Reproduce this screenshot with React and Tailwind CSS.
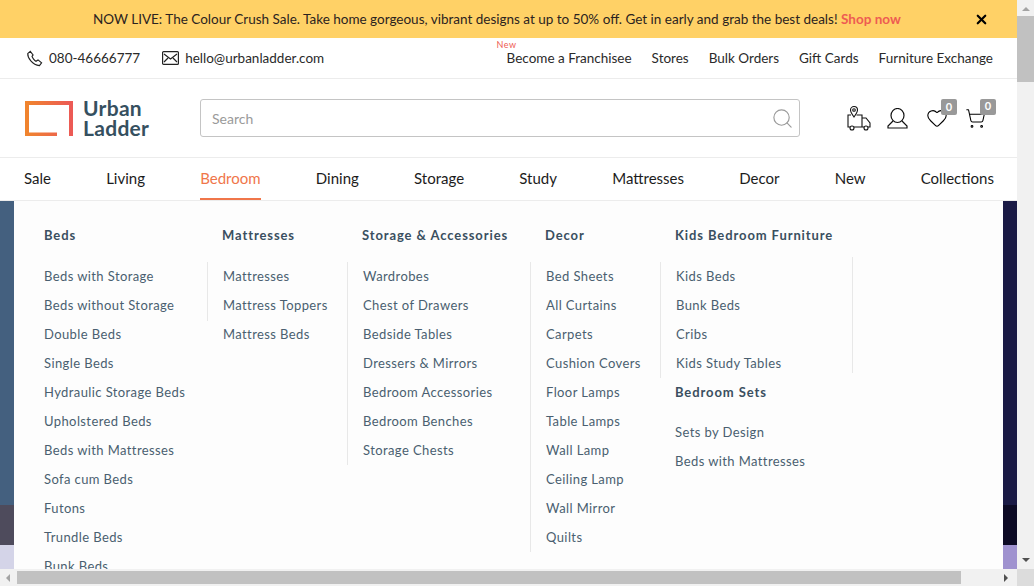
import { Heart, ShoppingCart, Search, X } from 'lucide-react';

const font = { fontFamily: 'Lato' };

const topLinks = ['Become a Franchisee', 'Stores', 'Bulk Orders', 'Gift Cards', 'Furniture Exchange'];
const navLinks = ['Sale', 'Living', 'Bedroom', 'Dining', 'Storage', 'Study', 'Mattresses', 'Decor', 'New', 'Collections'];

const menu = [
  { title: 'Beds', w: 'w-[178px]', first: true, h: 'h-[338px]', items: ['Beds with Storage', 'Beds without Storage', 'Double Beds', 'Single Beds', 'Hydraulic Storage Beds', 'Upholstered Beds', 'Beds with Mattresses', 'Sofa cum Beds', 'Futons', 'Trundle Beds', 'Bunk Beds'] },
  { title: 'Mattresses', w: 'w-[140px]', h: 'h-[59px]', items: ['Mattresses', 'Mattress Toppers', 'Mattress Beds'] },
  { title: 'Storage & Accessories', w: 'w-[183px]', h: 'h-[203px]', items: ['Wardrobes', 'Chest of Drawers', 'Bedside Tables', 'Dressers & Mirrors', 'Bedroom Accessories', 'Bedroom Benches', 'Storage Chests'] },
  { title: 'Decor', w: 'w-[130px]', h: 'h-[290px]', items: ['Bed Sheets', 'All Curtains', 'Carpets', 'Cushion Covers', 'Floor Lamps', 'Table Lamps', 'Wall Lamp', 'Ceiling Lamp', 'Wall Mirror', 'Quilts'] },
];

function MenuLink({ children }) {
  return <li className="h-[29px] leading-[29px] text-[13px] tracking-[0.4px] text-[#4a5f70] whitespace-nowrap">{children}</li>;
}

function MenuTitle({ children }) {
  return <div className="text-[13px] font-bold tracking-[0.9px] text-[#3a4f60] whitespace-nowrap">{children}</div>;
}

function Logo() {
  return (
    <div className="flex items-center gap-[10px] w-[175px]">
      <svg width="48" height="35" viewBox="0 0 48 35" fill="none">
        <defs>
          <linearGradient id="lg" x1="0" y1="0" x2="1" y2="0">
            <stop offset="0" stopColor="#f0842e" />
            <stop offset="1" stopColor="#ec5a55" />
          </linearGradient>
        </defs>
        <path d="M32 33.5H2V2H46V35" stroke="url(#lg)" strokeWidth="4" />
      </svg>
      <div className="text-[21px] leading-[20px] font-bold text-[#36505f] tracking-[0.3px]">Urban<br />Ladder</div>
    </div>
  );
}

export default function App() {
  return (
    <div className="h-[586px] w-[1034px] overflow-hidden flex flex-col relative bg-white" style={font}>
      <div className="flex flex-1 min-h-0">
        <div className="w-[1017px] flex flex-col">
          <div className="h-[38px] bg-[#ffd166] flex items-center text-[13.5px] text-[#2b2320] shrink-0">
            <span className="ml-[93px] whitespace-nowrap">NOW LIVE: The Colour Crush Sale. Take home gorgeous, vibrant designs at up to 50% off. Get in early and grab the best deals! <span className="font-bold text-[#ee5c52]">Shop now</span></span>
            <X size={15} strokeWidth={3.5} className="ml-auto mr-[28px] text-black" />
          </div>

          <div className="h-[41px] border-b border-[#ececec] flex items-center justify-between pl-[26px] pr-[24px] text-[13.5px] text-[#2a2a2a] shrink-0">
            <div className="flex items-center">
              <svg width="17" height="17" viewBox="0 0 24 24" fill="none" stroke="#222" strokeWidth="1.6"><path d="M6 2 2.5 5C2 11 9 21 19 22l3-4-5-4-3 2c-2-1-5-5-5.500-7L10 7z" /></svg>
              <span className="ml-[6px]">080-46666777</span>
              <svg className="ml-[22px]" width="17" height="14" viewBox="0 0 17 14" fill="none" stroke="#222" strokeWidth="1.2"><rect x="0.600" y="0.600" width="15.800" height="12.800" rx="1" /><path d="M2 3l6.500 5L15 3M2 11l4-4M15 11l-4-4" /></svg>
              <span className="ml-[6px]">hello@urbanladder.com</span>
            </div>
            <div className="flex gap-[20px] relative">
              <span className="absolute left-[-10px] top-[-10px] text-[9px] tracking-[0.5px] text-[#ee5c52]">New</span>
              {topLinks.map((l) => <span key={l} className="whitespace-nowrap">{l}</span>)}
            </div>
          </div>

          <div className="h-[79px] border-b border-[#ececec] flex items-center pl-[25px] shrink-0">
            <Logo />
            <div className="w-[600px] h-[38px] border border-[#c4c4c4] rounded-[3px] flex items-center justify-between pl-[11px] pr-[5px] text-[14px] text-[#9a9a9a]">
              <span>Search</span>
              <Search size={23} strokeWidth={1.2} className="text-[#9a9a9a]" />
            </div>
            <div className="flex items-center ml-[47px] text-black">
              <svg width="25" height="26" viewBox="0 0 25 26" fill="none" stroke="#111" strokeWidth="1.1">
                <path d="M7 12C4.500 8.500 3.500 7 3.500 5a3.500 3.500 0 0 1 7 0c0 2-1 3.500-3.500 7z" />
                <circle cx="7" cy="5" r="1.300" />
                <path d="M4 10H1v12h2M9.500 10H15v12H7M15 13h4l4 5v4h-2M15 22h2" />
                <circle cx="5" cy="23" r="2" /><circle cx="19" cy="23" r="2" />
              </svg>
              <svg className="ml-[15px]" width="21" height="21" viewBox="0 0 21 21" fill="none" stroke="#111" strokeWidth="1.2">
                <ellipse cx="10.500" cy="7.500" rx="6.500" ry="7" />
                <path d="M6 13 1 18v2h19v-2l-5-5" />
              </svg>
              <div className="relative ml-[18px]">
                <Heart size={22} strokeWidth={1.2} />
                <span className="absolute left-[15px] top-[-8px] w-[16px] h-[16px] rounded-[2px] bg-[#999] text-white text-[11px] font-bold flex items-center justify-center">0</span>
              </div>
              <div className="relative ml-[17px]">
                <ShoppingCart size={21} strokeWidth={1.2} />
                <span className="absolute left-[15px] top-[-9px] w-[16px] h-[16px] rounded-[2px] bg-[#999] text-white text-[11px] font-bold flex items-center justify-center">0</span>
              </div>
            </div>
          </div>

          <div className="h-[43px] border-b border-[#ececec] flex justify-between pl-[24px] pr-[23px] text-[15px] text-[#1c1c1c] shrink-0">
            {navLinks.map((l) => (
              <span key={l} className={l === 'Bedroom' ? 'text-[#f0764a] border-b-2 border-[#f0764a] leading-[41px]' : 'leading-[41px]'}>{l}</span>
            ))}
          </div>

          <div className="relative flex-1 min-h-0 overflow-hidden bg-[#1a1a45]">
            <div className="flex h-full">
              <div className="w-[14px] flex flex-col">
                <div className="flex-1 bg-[#44607f]" />
                <div className="h-[40px] bg-[#4e4b5c]" />
                <div className="h-[24px] bg-[#d4d4e8]" />
              </div>
              <div className="flex-1" />
              <div className="w-[14px] flex flex-col">
                <div className="flex-1 bg-[#1a1a45]" />
                <div className="h-[40px] bg-[#0c0a24]" />
                <div className="h-[24px] bg-[#9f92cf]" />
              </div>
            </div>
            <div className="absolute left-[14px] top-0 w-[989px] h-full bg-[#fdfdfd] px-[30px] pt-[25px] overflow-hidden">
              <div className="flex">
                {menu.map((c) => (
                  <div key={c.title} className={c.w}>
                    <MenuTitle>{c.title}</MenuTitle>
                    <ul className={(c.first ? '' : 'border-l border-[#e8e8e8] -ml-[15px] pl-[15px] ') + 'mt-[16px] ' + c.h}>
                      {c.items.map((i) => <MenuLink key={i}>{i}</MenuLink>)}
                    </ul>
                  </div>
                ))}
                <div className="w-[178px]">
                  <MenuTitle>Kids Bedroom Furniture</MenuTitle>
                  <ul className="border-l border-[#e8e8e8] -ml-[15px] pl-[15px] mt-[16px] h-[116px]">
                    {['Kids Beds', 'Bunk Beds', 'Cribs', 'Kids Study Tables'].map((i) => <MenuLink key={i}>{i}</MenuLink>)}
                  </ul>
                  <div className="mt-[5px]"><MenuTitle>Bedroom Sets</MenuTitle></div>
                  <ul className="mt-[16px]">
                    {['Sets by Design', 'Beds with Mattresses'].map((i) => <MenuLink key={i}>{i}</MenuLink>)}
                  </ul>
                </div>
                <div className="border-l border-[#e8e8e8] h-[116px] mt-[31px] -ml-[1px]" />
              </div>
            </div>
          </div>
        </div>

        <div className="w-[17px] bg-[#f1f1f1] flex flex-col items-center shrink-0">
          <span className="mt-[7px] w-0 h-0 border-x-[4px] border-x-transparent border-b-[4px] border-b-[#a3a3a3]" />
          <div className="mt-[5px] w-full h-[66px] bg-[#c1c1c1]" />
          <span className="mt-auto mb-[7px] w-0 h-0 border-x-[4px] border-x-transparent border-t-[4px] border-t-[#505050]" />
        </div>
      </div>

      <div className="h-[17px] flex bg-[#f1f1f1] items-center shrink-0">
        <span className="ml-[6px] w-0 h-0 border-y-[4px] border-y-transparent border-r-[4px] border-r-[#a3a3a3]" />
        <div className="ml-[7px] w-[944px] h-[13px] bg-[#c1c1c1]" />
        <span className="ml-[43px] w-0 h-0 border-y-[4px] border-y-transparent border-l-[4px] border-l-[#505050]" />
        <div className="ml-auto w-[17px] h-full bg-[#dcdcdc]" />
      </div>
    </div>
  );
}
